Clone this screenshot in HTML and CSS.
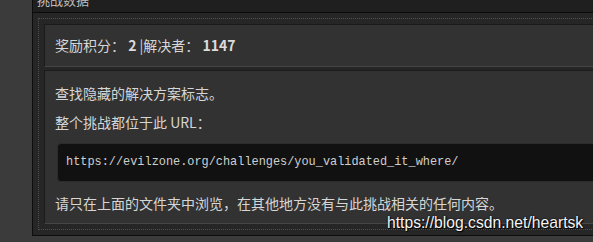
FILE: index.html
```html
<!DOCTYPE html>
<html lang="zh">
<head>
<meta charset="utf-8">
<title>挑战数据</title>
<link rel="stylesheet" href="styles.css">
</head>
<body>
<div class="page">
  <div class="panel">
    <div class="panel-head">挑战数据</div>
    <div class="panel-body">
      <div class="dotted">
        <div class="box box-stats">奖励积分： <b>2</b> |解决者： <b>1147</b></div>
        <div class="box box-desc">
          <p class="line">查找隐藏的解决方案标志。</p>
          <p class="line gap">整个挑战都位于此 URL：</p>
          <pre class="code">https://evilzone.org/challenges/you_validated_it_where/</pre>
          <p class="line">请只在上面的文件夹中浏览，在其他地方没有与此挑战相关的任何内容。</p>
        </div>
      </div>
    </div>
  </div>
  <div class="watermark">https://blog.csdn.net/heartsk</div>
</div>
</body>
</html>
```
FILE: styles.css
```css
html, body {
  margin: 0;
  padding: 0;
  height: 100%;
  overflow: hidden;
}
body {
  background: #3b3b3b;
  font-family: "Microsoft YaHei", "Noto Sans CJK SC", "Noto Sans", sans-serif;
  color: #d6d6d6;
}
.page {
  position: relative;
  display: flow-root;
  padding-left: 32px;
  height: 242px;
}
.panel {
  width: 640px;
  margin-top: -13px;
  background: #262626;
  border: 1px solid #0d0d0d;
}
.panel-head {
  height: 24px;
  line-height: 24px;
  padding-left: 4px;
  font-size: 13px;
  color: #bdbdbd;
  background: #1f1f1f;
  border-bottom: 1px solid #0a0a0a;
}
.panel-body {
  padding: 5px;
}
.dotted {
  border: 1px dotted #4e4e4e;
  padding: 5px;
}
.box {
  background: #323232;
  border: 1px solid #1b1b1b;
  border-bottom-color: #454545;
  font-size: 14px;
}
.box-stats {
  padding: 10px 10px;
  line-height: 21px;
}
.box-stats b {
  font-weight: bold;
  color: #dcdcdc;
}
.box-desc {
  margin-top: 3px;
  padding: 12px 10px 10px;
}
.line {
  margin: 0;
  line-height: 20px;
}
.line.gap {
  margin-top: 9px;
}
.code {
  margin: 11px 0 11px 2px;
  padding: 8px 8px 9px;
  background: #111111;
  border: 1px solid #2c2c2c;
  border-radius: 4px;
  font-family: "Liberation Mono", "DejaVu Sans Mono", monospace;
  font-size: 11.9px;
  line-height: 20px;
  color: #cfcfcf;
}
.watermark {
  position: absolute;
  left: 387px;
  top: 213px;
  font-family: "Liberation Sans", Arial, sans-serif;
  font-size: 15.7px;
  line-height: 20px;
  color: #f4f4f4;
  text-shadow: 0 0 2px #000, 1px 1px 1px #000;
}
```
